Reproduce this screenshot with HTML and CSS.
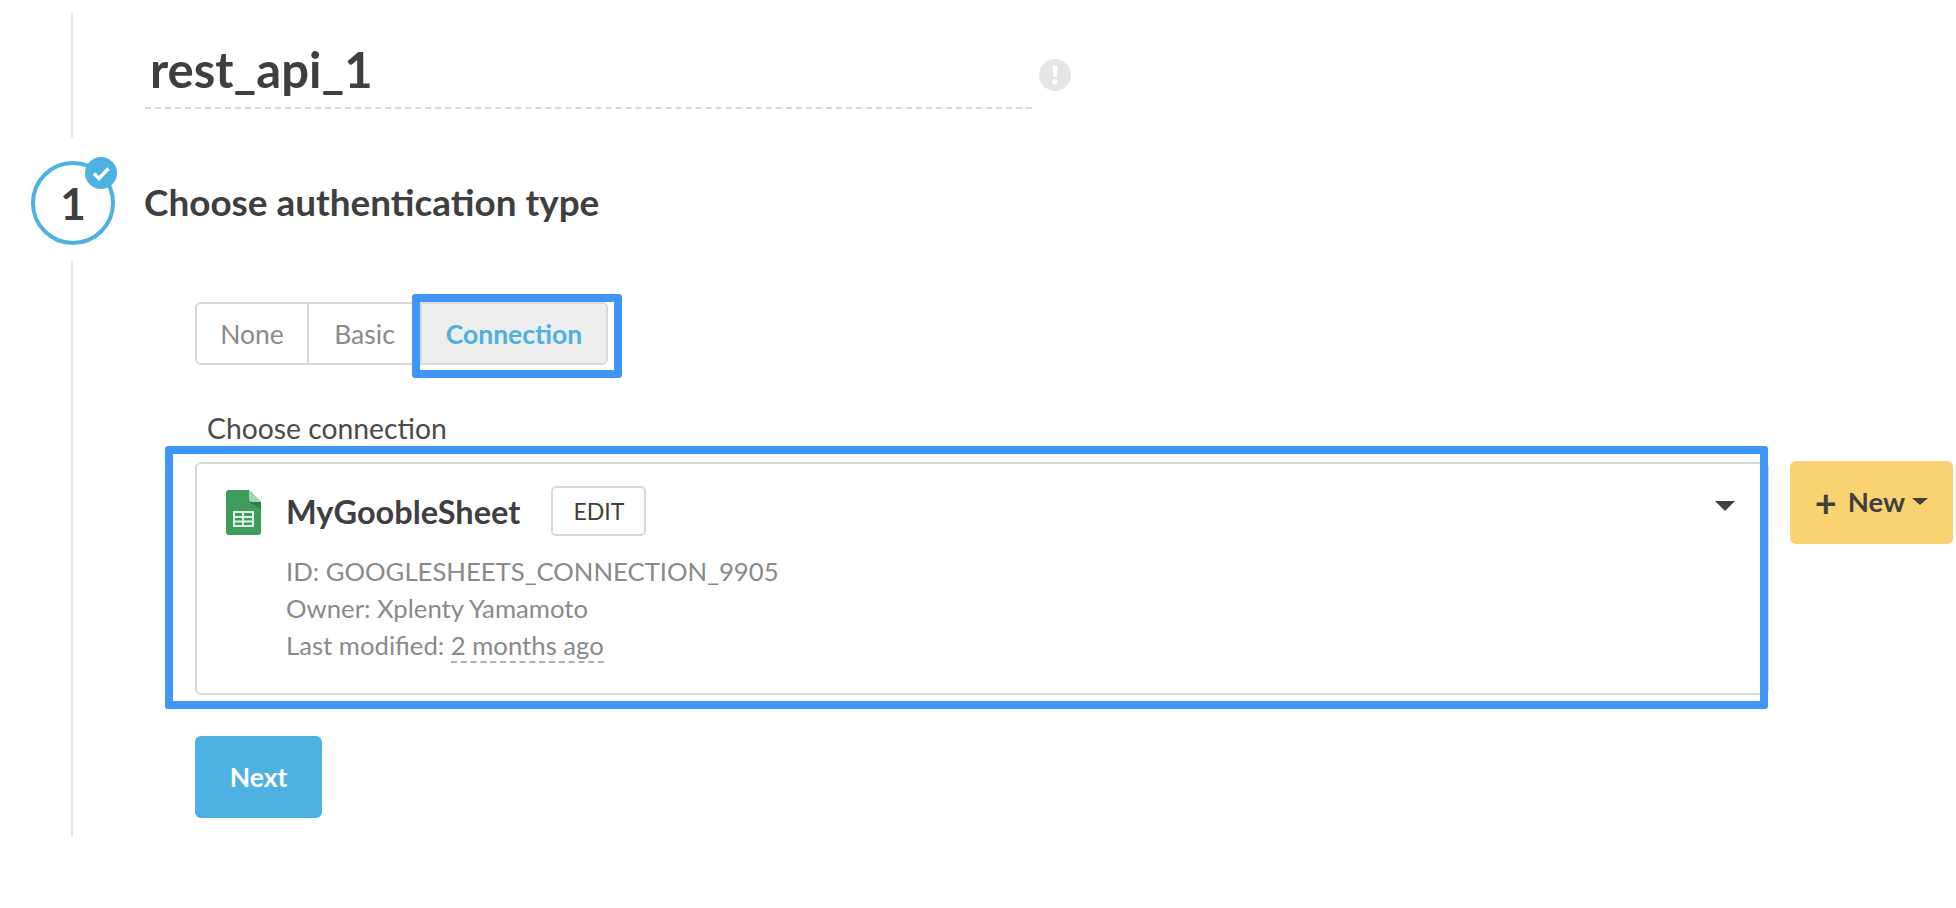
FILE: index.html
```html
<!DOCTYPE html>
<html>
  <head>
    <link rel="stylesheet" href="styles.css">
  </head>
  <body>
    <div class="title-section">
      <div class="title-field">rest_api_1</div>
      <svg class="warn-icon" width="32" height="32" viewBox="0 0 32 32">
        <circle cx="16" cy="16" r="16" fill="#e6e6e6"/>
        <path d="M13.6 7h4.8l-.8 11h-3.2z" fill="#fff"/>
        <circle cx="16" cy="23" r="2.8" fill="#fff"/>
      </svg>
    </div>

    <div class="step-head">
      <div class="step-circle">
        1
        <svg class="step-badge" width="32" height="32" viewBox="0 0 32 32">
          <circle cx="16" cy="16" r="16" fill="#4db1e2"/>
          <path d="M9 16.500l5 5 9.500-10" fill="none" stroke="#fff" stroke-width="3.400"/>
        </svg>
      </div>
      <h2>Choose authentication type</h2>
    </div>

    <div class="step-body">
      <div class="auth-tabs">
        <div class="tab tab-none">None</div>
        <div class="tab tab-basic">Basic</div>
        <div class="tab active">Connection</div>
        <div class="mark mark-tab"></div>
      </div>

      <label class="conn-label">Choose connection</label>
      <div class="conn-row">
        <div class="conn-card">
          <svg class="sheet-icon" width="35" height="45" viewBox="0 0 35 45">
            <path d="M3 0h20l12 12v30a3 3 0 0 1-3 3H3a3 3 0 0 1-3-3V3a3 3 0 0 1 3-3z" fill="#3f9d5c"/>
            <path d="M23 0l12 12H26a3 3 0 0 1-3-3z" fill="#a3d3b4"/>
            <path d="M23 12h12v7z" fill="#2f7f49"/>
            <path d="M7 21h21v16H7z M9 23v3h7v-3z M18 23v3h8v-3z M9 28v2.500h7V28z M18 28v2.500h8V28z M9 32.500V35h7v-2.500z M18 32.500V35h8v-2.500z" fill="#dff0e5" fill-rule="evenodd"/>
          </svg>
          <div class="conn-info">
            <div class="conn-top">
              <span class="conn-name">MyGoobleSheet</span>
              <button class="edit-btn">EDIT</button>
            </div>
            <div class="conn-meta">ID: GOOGLESHEETS_CONNECTION_9905</div>
            <div class="conn-meta">Owner: Xplenty Yamamoto</div>
            <div class="conn-meta">Last modified: <span class="dashed">2 months ago</span></div>
          </div>
          <span class="caret caret-big"></span>
          <div class="mark mark-card"></div>
        </div>
        <button class="new-btn"><span class="plus">+</span><span>New</span><span class="caret"></span></button>
      </div>

      <button class="next-btn">Next</button>
    </div>
  </body>
</html>
```

FILE: styles.css
```css
body {
  margin: 0;
  background: #fff;
  color: #3f3f3f;
  font-family: Lato, "Open Sans", sans-serif;
}
button {
  font-family: inherit;
  cursor: pointer;
}

.title-section {
  display: flex;
  align-items: flex-start;
  box-sizing: border-box;
  height: 125px;
  margin: 13px 0 0 71px;
  padding-left: 72px;
  border-left: 2px solid #e8e8e8;
}
.title-field {
  box-sizing: border-box;
  width: 887px;
  height: 96px;
  padding: 25px 0 0 5px;
  border-bottom: 2px dashed #d9d9d9;
  font-size: 49px;
  line-height: 62px;
  font-weight: 700;
}
.warn-icon {
  margin: 46px 0 0 7px;
}

.step-head {
  display: flex;
  align-items: center;
  box-sizing: border-box;
  height: 123px;
  padding: 7px 0 0 31px;
}
.step-circle {
  position: relative;
  display: flex;
  align-items: center;
  justify-content: center;
  box-sizing: border-box;
  width: 84px;
  height: 84px;
  border: 4px solid #4db1e2;
  border-radius: 50%;
  font-size: 44px;
  font-weight: 700;
}
.step-badge {
  position: absolute;
  left: 50px;
  top: -8px;
}
.step-head h2 {
  margin: -3px 0 0 29px;
  font-size: 36.900px;
  font-weight: 700;
}

.step-body {
  box-sizing: border-box;
  height: 576px;
  margin-left: 71px;
  padding: 41px 0 0 122px;
  border-left: 2px solid #e8e8e8;
}

.auth-tabs {
  position: relative;
  display: inline-flex;
  height: 63px;
  box-sizing: border-box;
  border: 2px solid #d9d9d9;
  border-radius: 6px;
  vertical-align: top;
}
.tab {
  display: flex;
  align-items: center;
  justify-content: center;
  box-sizing: border-box;
  border-right: 2px solid #d9d9d9;
  font-size: 26.500px;
  color: #8a8a8a;
}
.tab-none {
  width: 112px;
}
.tab-basic {
  width: 113px;
}
.tab.active {
  width: 184px;
  border-right: 0;
  background: #eee;
  color: #4db1e2;
  font-weight: 700;
  border-radius: 0 5px 5px 0;
}
.mark {
  position: absolute;
  box-sizing: border-box;
  border: 8px solid #4096f8;
  border-radius: 3px;
  pointer-events: none;
}
.mark-tab {
  right: -16px;
  top: -10px;
  width: 210px;
  height: 84px;
}
.mark-card {
  left: -32px;
  top: -18px;
  width: 1603px;
  height: 263px;
}

.conn-label {
  display: block;
  height: 97px;
  box-sizing: border-box;
  padding: 46px 0 0 12px;
  font-size: 28.300px;
  line-height: 34px;
  color: #4a4a4a;
}
.conn-row {
  display: flex;
  align-items: flex-start;
  gap: 21px;
}
.conn-card {
  position: relative;
  display: flex;
  box-sizing: border-box;
  width: 1574px;
  height: 233px;
  padding: 26px 32px 0 29px;
  border: 2px solid #d9d9d9;
  border-radius: 6px;
}
.sheet-icon {
  flex: none;
  margin-right: 25px;
}
.conn-info {
  flex: 1;
}
.conn-top {
  display: flex;
  align-items: center;
  margin: -4px 0 17px;
}
.conn-name {
  font-size: 32.500px;
  font-weight: 700;
}
.edit-btn {
  width: 95px;
  height: 50px;
  margin-left: 31px;
  background: #fff;
  border: 2px solid #d9d9d9;
  border-radius: 5px;
  color: #3f3f3f;
  font-size: 23px;
}
.conn-meta {
  font-size: 25.700px;
  line-height: 37px;
  color: #8a8a8a;
}
.dashed {
  padding-bottom: 1px;
  border-bottom: 2px dashed #b0b0b0;
}
.caret {
  display: inline-block;
  border-left: 8px solid transparent;
  border-right: 8px solid transparent;
  border-top: 7px solid #3f3f3f;
}
.caret-big {
  flex: none;
  align-self: flex-start;
  margin-top: 11px;
  border-left-width: 10px;
  border-right-width: 10px;
  border-top-width: 10px;
  height: 0;
}

.new-btn {
  display: flex;
  align-items: center;
  justify-content: center;
  gap: 7px;
  width: 163px;
  height: 83px;
  margin-top: -1px;
  padding: 0 0 2px;
  background: #f9d372;
  border: 0;
  border-radius: 6px;
  color: #3f3f3f;
  font-size: 27.500px;
  font-weight: 700;
}
.plus {
  margin-right: 4px;
  font-size: 38px;
  line-height: 36px;
}
.next-btn {
  display: block;
  width: 127px;
  height: 82px;
  margin-top: 41px;
  background: #4db1e2;
  border: 0;
  border-radius: 6px;
  color: #fff;
  font-size: 26.500px;
  font-weight: 700;
}
```
